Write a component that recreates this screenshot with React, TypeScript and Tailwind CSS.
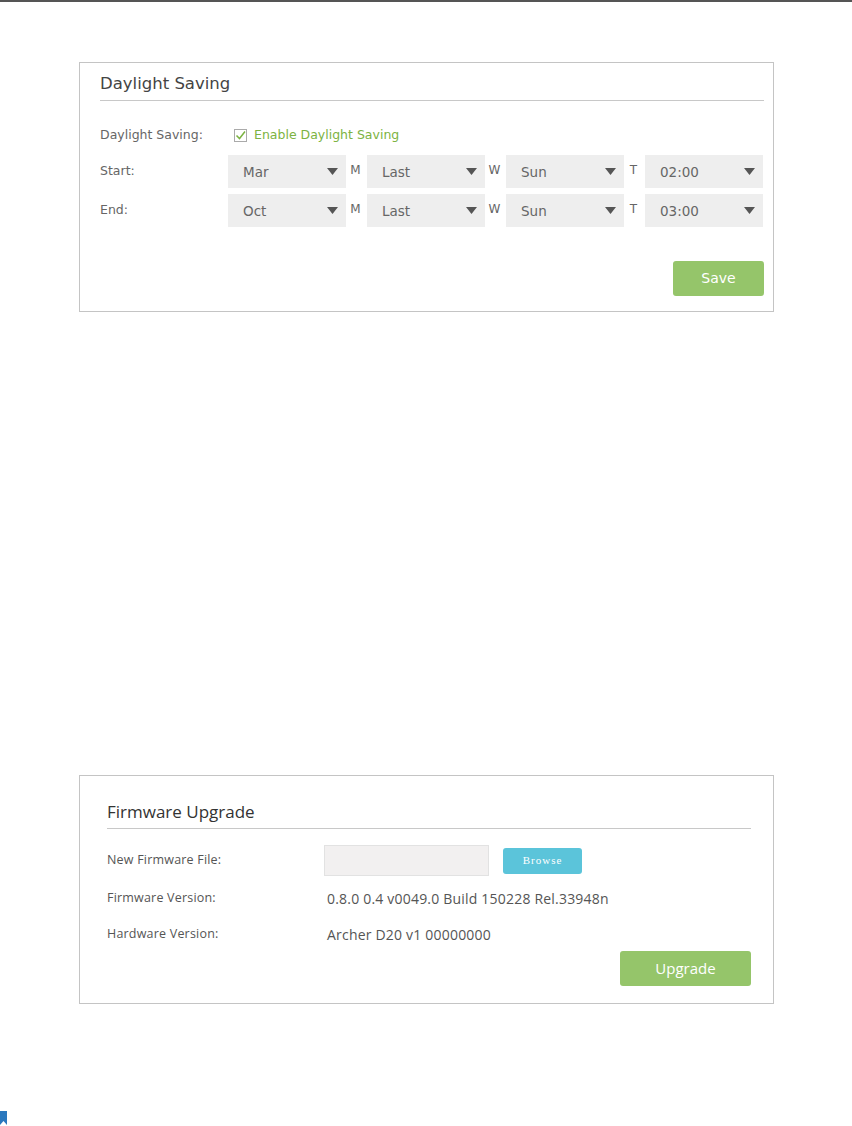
import React from 'react'

type SelectProps = { value: string }

function Select({ value }: SelectProps) {
  return (
    <div className="flex h-[33px] w-[118px] items-center justify-between bg-[#eeeeee] pl-[15px] pr-[8px] text-[13.5px] text-[#666]">
      <span className="pt-[2px]">{value}</span>
      <svg width="11" height="7" viewBox="0 0 11 7" className="block">
        <path d="M0 0h11L5.5 7z" fill="#555" />
      </svg>
    </div>
  )
}

function Letter({ ch }: { ch: string }) {
  return (
    <span className="flex w-[21px] self-start justify-center pt-[6px] pr-[2px] text-[12px] text-[#666]">{ch}</span>
  )
}

function DateRow({ label, values }: { label: string; values: string[] }) {
  const letters = ['M', 'W', 'T']
  return (
    <div className="flex items-start">
      <span className="w-[128px] pt-[7px] text-[12.5px] text-[#666]">{label}</span>
      {values.map((v, i) => (
        <React.Fragment key={i}>
          <Select value={v} />
          {i < 3 && <Letter ch={letters[i]} />}
        </React.Fragment>
      ))}
    </div>
  )
}

function DaylightSaving() {
  return (
    <div className="ml-[79px] mt-[60px] w-[695px] border border-[#c4c4c4] pl-[20px] pr-[9px] pt-[9px] pb-[15px] font-['DejaVu_Sans',sans-serif]">
      <div className="border-b border-[#c8c8c8] pb-[4px]">
        <h2 className="h-6 text-[16.5px] leading-6 text-[#444]">Daylight Saving</h2>
      </div>
      <div className="mt-[24px] flex h-[20px] items-center">
        <span className="w-[134px] text-[12.5px] text-[#666]">Daylight Saving:</span>
        <span className="flex h-[13px] w-[13px] items-center justify-center border border-[#aaa] bg-white">
          <svg width="11" height="11" viewBox="0 0 11 11">
            <path d="M1.5 5.5l3 3L10 1.5" fill="none" stroke="#7cb342" strokeWidth="1.5" />
          </svg>
        </span>
        <span className="ml-[7px] text-[12.5px] text-[#7cb342]">Enable Daylight Saving</span>
      </div>
      <div className="mt-[10px] flex flex-col gap-[6px]">
        <DateRow label="Start:" values={['Mar', 'Last', 'Sun', '02:00']} />
        <DateRow label="End:" values={['Oct', 'Last', 'Sun', '03:00']} />
      </div>
      <div className="mt-[34px] flex justify-end">
        <button className="h-[35px] w-[91px] rounded-[3px] bg-[#95c56a] text-[14px] text-white">Save</button>
      </div>
    </div>
  )
}

function FirmwareUpgrade() {
  return (
    <div className="ml-[79px] mt-[463px] w-[695px] border border-[#c4c4c4] pl-[27px] pr-[22px] pt-[24px] pb-[17px] font-['Open_Sans',sans-serif]">
      <div className="border-b border-[#c8c8c8] pb-[4px]">
        <h2 className="h-6 text-[17px] leading-6 text-[#333]">Firmware Upgrade</h2>
      </div>
      <div className="mt-[16px] flex items-center">
        <span className="w-[217px] text-[12.5px] tracking-[0.2px] text-[#555]">New Firmware File:</span>
        <div className="h-[31px] w-[165px] border border-[#e2e2e2] bg-[#f2f0f0]" />
        <button className="ml-[14px] h-[26px] w-[79px] rounded-[3px] bg-[#5bc4da] font-['Liberation_Serif',serif] text-[11px] tracking-[1px] text-white">
          Browse
        </button>
      </div>
      <div className="mt-[12px] flex h-[20px] items-center">
        <span className="w-[220px] text-[12.5px] tracking-[0.2px] text-[#555]">Firmware Version:</span>
        <span className="text-[14px] tracking-[0.2px] text-[#555]">0.8.0 0.4 v0049.0 Build 150228 Rel.33948n</span>
      </div>
      <div className="mt-[16px] flex h-[20px] items-center">
        <span className="w-[220px] text-[12.5px] tracking-[0.2px] text-[#555]">Hardware Version:</span>
        <span className="text-[14px] tracking-[0.2px] text-[#555]">Archer D20 v1 00000000</span>
      </div>
      <div className="mt-[7px] flex justify-end">
        <button className="h-[35px] w-[131px] rounded-[3px] bg-[#95c56a] text-[15px] text-white">Upgrade</button>
      </div>
    </div>
  )
}

export default function App() {
  return (
    <div className="min-h-[1126px] w-[852px] bg-white">
      <div className="h-[2px] bg-[#555]" />
      <DaylightSaving />
      <FirmwareUpgrade />
      <div className="mt-[107px]">
        <svg width="8" height="14" viewBox="0 0 8 14" className="block">
          <path d="M0 0h7v14L3.5 10 0 14z" fill="#2a78be" />
        </svg>
      </div>
    </div>
  )
}
